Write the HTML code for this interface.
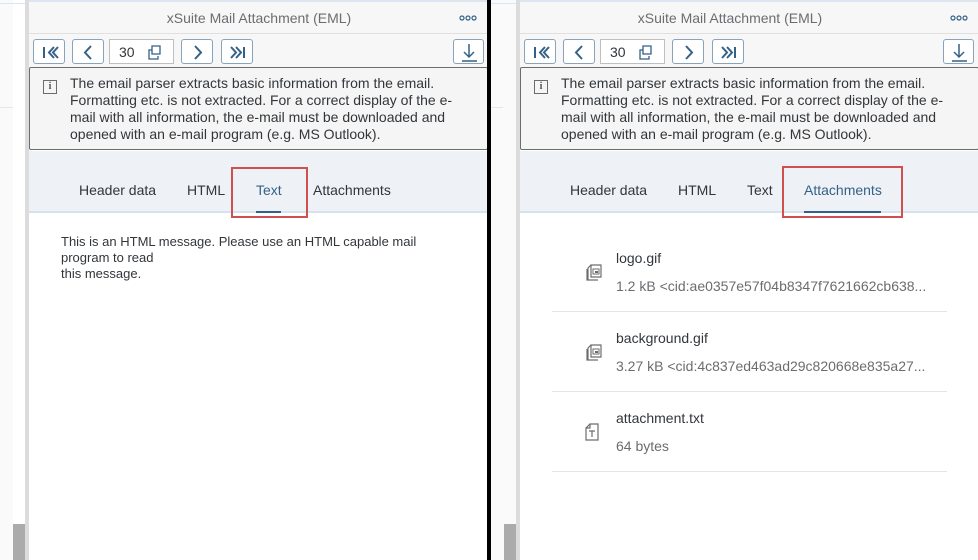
<!DOCTYPE html>
<html><head><style>
*{margin:0;padding:0;box-sizing:border-box}
body{width:978px;height:560px;overflow:hidden;background:#fff;font-family:"Liberation Sans",Arial,sans-serif;position:relative}
.a{position:absolute}
.p{position:absolute;top:0;width:460px;height:560px;background:#fff;overflow:hidden}
.btn{position:absolute;top:39px;height:25px;border:1px solid #89a3bb;border-radius:3px;background:#fff}
.btn svg{position:absolute;left:0;top:0}
.tab{position:absolute;top:182px;font-size:14px;color:#32363a}
.it{position:absolute;left:32px;width:395px;height:80px;border-bottom:1px solid #e5e5e5}
.it .t{position:absolute;left:64px;top:18px;font-size:14px;color:#32363a}
.it .s{position:absolute;left:64px;top:46px;font-size:14px;color:#6a6d70}
.it svg{position:absolute;left:32px;top:30px}
.info{position:absolute;left:41px;top:75px;width:396px;font-size:14px;line-height:17px;color:#32363a}
</style></head><body>
<div class="a" style="left:0;top:0;width:13px;height:560px;background:#fafafa"></div>
<div class="a" style="left:0;top:107px;width:13px;height:1px;background:#dfe8f0"></div>
<div class="a" style="left:0;top:3px;width:29px;height:1px;background:#dbe6f0"></div>
<div class="a" style="left:13px;top:524px;width:12px;height:36px;background:#ababab"></div>
<div class="a" style="left:25px;top:0;width:4px;height:560px;background:#dcdcdc"></div>
<div class="a" style="left:491px;top:0;width:25px;height:560px;background:#fafafa"></div>
<div class="a" style="left:491px;top:3px;width:27px;height:1px;background:#dbe6f0"></div>
<div class="a" style="left:491px;top:107px;width:12px;height:1px;background:#dfe8f0"></div>
<div class="a" style="left:504px;top:524px;width:12px;height:36px;background:#ababab"></div>
<div class="a" style="left:516px;top:0;width:4px;height:560px;background:#dcdcdc"></div>

<div class="p" style="left:29px">
 <div class="a" style="left:0;top:0;width:460px;height:34px;background:#f7f7f7;border-top:2px solid #dbe6f0;border-bottom:1px solid #e0e0e0"></div>
 <div class="a" style="left:0;top:10px;width:460px;text-align:center;font-size:14px;color:#6a6d70">xSuite Mail Attachment (EML)</div>
 <svg class="a" style="left:430px;top:14px" width="18" height="8"><g fill="none" stroke="#346187" stroke-width="1.2"><circle cx="3" cy="4" r="2"/><circle cx="9" cy="4" r="2"/><circle cx="15" cy="4" r="2"/></g></svg>
 <div class="a" style="left:0;top:34px;width:460px;height:34px;background:#f7f7f7"></div>
 <div class="btn" style="left:4px;width:32px"><svg width="32" height="25"><path d="M10 7v11M20 7l-5 5.5 5 5.5M24 7l-5 5.5 5 5.5" stroke="#346187" stroke-width="2" fill="none"/></svg></div>
 <div class="btn" style="left:43px;width:32px"><svg width="32" height="25"><path d="M18 6l-6 6.5 6 6.5" stroke="#346187" stroke-width="2" fill="none"/></svg></div>
 <div class="btn" style="left:80px;width:65px;border-color:#bfbfbf;border-radius:0"><span class="a" style="left:9px;top:4px;font-size:14px;color:#32363a">30</span><svg width="65" height="25"><path d="M42 10h-3v9h9v-3M42 6h8v8h-8z" stroke="#346187" stroke-width="1.3" fill="none"/></svg></div>
 <div class="btn" style="left:152px;width:32px"><svg width="32" height="25"><path d="M13 6l6 6.5-6 6.5" stroke="#346187" stroke-width="2" fill="none"/></svg></div>
 <div class="btn" style="left:192px;width:32px"><svg width="32" height="25"><path d="M9 7l5 5.5-5 5.5M14 7l5 5.5-5 5.5M22 7v11" stroke="#346187" stroke-width="2" fill="none"/></svg></div>
 <div class="btn" style="left:424px;width:31px"><svg width="31" height="25"><path d="M15 4v13M10 12l5 5 5-5M8 21h15" stroke="#346187" stroke-width="1.5" fill="none"/></svg></div>
 <div class="a" style="left:0;top:67px;width:459px;height:83px;background:#f5f5f5;border:1px solid #6a6d70;border-radius:2px"></div>
 <div class="a" style="left:14px;top:80px;width:14px;height:14px;border:1px solid #6a6d70;font:bold 10px 'Liberation Serif',serif;color:#555;text-align:center;line-height:12px">i</div>
 <div class="info">The email parser extracts basic information from the email. Formatting etc. is not extracted. For a correct display of the e-<br>mail with all information, the e-mail must be downloaded and opened with an e-mail program (e.g. MS Outlook).</div>
 <div class="a" style="left:0;top:151px;width:460px;height:62px;background:#eef2f6;border-bottom:2px solid #d6e2ee"></div>
 <div class="tab" style="left:50px">Header data</div>
 <div class="tab" style="left:158px">HTML</div>
 <div class="tab" style="left:227px;color:#346187">Text</div>
 <div class="a" style="left:227px;top:211px;width:25px;height:2px;background:#346187"></div>
 <div class="tab" style="left:284px">Attachments</div>
 <div class="a" style="left:202px;top:167px;width:77px;height:51px;border:2px solid #d0504f"></div>
 <div class="a" style="left:32px;top:234px;width:380px;font-size:13px;line-height:16px;color:#32363a">This is an HTML message. Please use an HTML capable mail program to read<br>this message.</div>
</div>

<div class="p" style="left:520px">
 <div class="a" style="left:0;top:0;width:460px;height:34px;background:#f7f7f7;border-top:2px solid #dbe6f0;border-bottom:1px solid #e0e0e0"></div>
 <div class="a" style="left:0;top:10px;width:420px;text-align:center;font-size:14px;color:#6a6d70">xSuite Mail Attachment (EML)</div>
 <svg class="a" style="left:430px;top:14px" width="18" height="8"><g fill="none" stroke="#346187" stroke-width="1.2"><circle cx="3" cy="4" r="2"/><circle cx="9" cy="4" r="2"/><circle cx="15" cy="4" r="2"/></g></svg>
 <div class="a" style="left:0;top:34px;width:460px;height:34px;background:#f7f7f7"></div>
 <div class="btn" style="left:4px;width:32px"><svg width="32" height="25"><path d="M10 7v11M20 7l-5 5.5 5 5.5M24 7l-5 5.5 5 5.5" stroke="#346187" stroke-width="2" fill="none"/></svg></div>
 <div class="btn" style="left:43px;width:32px"><svg width="32" height="25"><path d="M18 6l-6 6.5 6 6.5" stroke="#346187" stroke-width="2" fill="none"/></svg></div>
 <div class="btn" style="left:80px;width:65px;border-color:#bfbfbf;border-radius:0"><span class="a" style="left:9px;top:4px;font-size:14px;color:#32363a">30</span><svg width="65" height="25"><path d="M42 10h-3v9h9v-3M42 6h8v8h-8z" stroke="#346187" stroke-width="1.3" fill="none"/></svg></div>
 <div class="btn" style="left:152px;width:32px"><svg width="32" height="25"><path d="M13 6l6 6.5-6 6.5" stroke="#346187" stroke-width="2" fill="none"/></svg></div>
 <div class="btn" style="left:192px;width:32px"><svg width="32" height="25"><path d="M9 7l5 5.5-5 5.5M14 7l5 5.5-5 5.5M22 7v11" stroke="#346187" stroke-width="2" fill="none"/></svg></div>
 <div class="btn" style="left:423px;width:31px"><svg width="31" height="25"><path d="M15 4v13M10 12l5 5 5-5M8 21h15" stroke="#346187" stroke-width="1.5" fill="none"/></svg></div>
 <div class="a" style="left:0;top:67px;width:459px;height:83px;background:#f5f5f5;border:1px solid #6a6d70;border-radius:2px"></div>
 <div class="a" style="left:14px;top:80px;width:14px;height:14px;border:1px solid #6a6d70;font:bold 10px 'Liberation Serif',serif;color:#555;text-align:center;line-height:12px">i</div>
 <div class="info">The email parser extracts basic information from the email. Formatting etc. is not extracted. For a correct display of the e-<br>mail with all information, the e-mail must be downloaded and opened with an e-mail program (e.g. MS Outlook).</div>
 <div class="a" style="left:0;top:151px;width:460px;height:62px;background:#eef2f6;border-bottom:2px solid #d6e2ee"></div>
 <div class="tab" style="left:50px">Header data</div>
 <div class="tab" style="left:158px">HTML</div>
 <div class="tab" style="left:227px">Text</div>
 <div class="tab" style="left:284px;color:#346187">Attachments</div>
 <div class="a" style="left:284px;top:211px;width:77px;height:2px;background:#346187"></div>
 <div class="a" style="left:262px;top:166px;width:121px;height:52px;border:2px solid #d0504f"></div>
 <div class="it" style="top:232px"><svg width="18" height="20"><path d="M3 7v11h11M7 3h10v12H7zM7 3L4 6v12" stroke="#6a6d70" stroke-width="1.2" fill="none"/><rect x="9" y="7" width="6" height="5" fill="none" stroke="#6a6d70"/><rect x="11" y="9" width="3" height="2" fill="#6a6d70"/></svg><div class="t">logo.gif</div><div class="s">1.2 kB &lt;cid:ae0357e57f04b8347f7621662cb638...</div></div>
 <div class="it" style="top:312px"><svg width="18" height="20"><path d="M3 7v11h11M7 3h10v12H7zM7 3L4 6v12" stroke="#6a6d70" stroke-width="1.2" fill="none"/><rect x="9" y="7" width="6" height="5" fill="none" stroke="#6a6d70"/><rect x="11" y="9" width="3" height="2" fill="#6a6d70"/></svg><div class="t">background.gif</div><div class="s">3.27 kB &lt;cid:4c837ed463ad29c820668e835a27...</div></div>
 <div class="it" style="top:392px"><svg width="18" height="20"><path d="M6 2h8v16H2V6zM6 2v4H2M5 9h6M8 9v6" stroke="#6a6d70" stroke-width="1.2" fill="none"/></svg><div class="t">attachment.txt</div><div class="s">64 bytes</div></div>
</div>
<div class="a" style="left:487px;top:0;width:4px;height:560px;background:#000"></div>
</body></html>
